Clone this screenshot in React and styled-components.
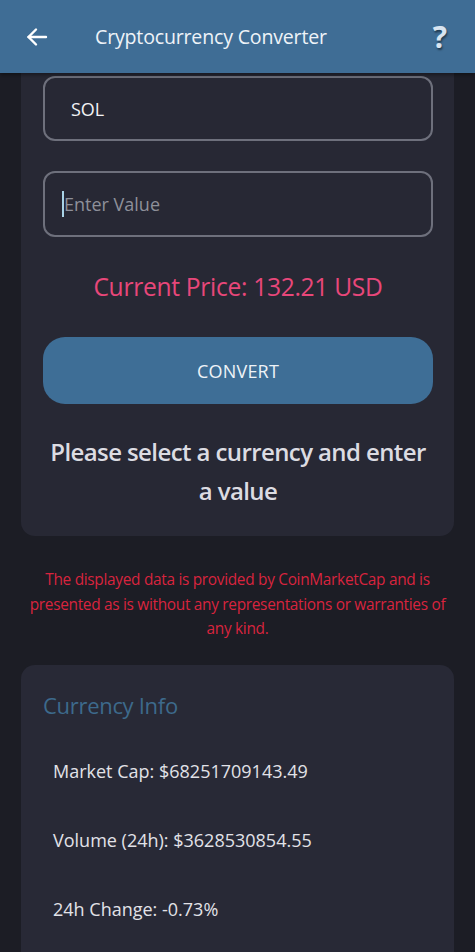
import React from "react";
import styled, { createGlobalStyle } from "styled-components";

const Global = createGlobalStyle`
  html, body { margin: 0; padding: 0; background: #1c1d25; }
  body { font-family: "Open Sans", "Noto Sans", sans-serif; overflow: hidden; }
  * { box-sizing: border-box; }
`;

const Page = styled.div`
  width: 475px;
  height: 952px;
  background: #1c1d25;
  display: flex;
  flex-direction: column;
  overflow: hidden;
`;

const Header = styled.header`
  height: 73px;
  flex-shrink: 0;
  background: #3f6d95;
  display: flex;
  align-items: center;
  padding: 0 28px 0 25px;
  box-shadow: 0 2px 4px rgba(0,0,0,0.4);
  position: relative;
  z-index: 2;
`;

const Title = styled.h1`
  margin: 0 0 0 46px;
  flex: 1;
  font-size: 19.6px;
  font-weight: 400;
  color: #eef3f8;
  letter-spacing: -0.2px;
`;

const Help = styled.span`
  font-size: 30px;
  font-weight: 700;
  color: #d8e4f0;
  text-shadow: 1px 2px 2px rgba(0,0,0,0.45);
  line-height: 1;
`;

const Content = styled.main`
  padding: 0 21px;
  display: flex;
  flex-direction: column;
`;

const Card = styled.section`
  background: #272834;
  border-radius: 0 0 14px 14px;
  padding: 3px 21px 26px 22px;
  display: flex;
  flex-direction: column;
  align-items: center;
`;

const Field = styled.div`
  width: 100%;
  height: ${p => p.$h}px;
  border: 2px solid #6e707c;
  border-radius: 12px;
  display: flex;
  align-items: center;
  padding-left: ${p => p.$pad}px;
  margin-bottom: ${p => p.$mb || 0}px;
  font-size: ${p => p.$fs}px;
  color: ${p => p.$color};
`;

const Caret = styled.span`
  display: inline-block;
  width: 2px;
  height: 26px;
  background: #a9d3e6;
`;

const Price = styled.div`
  margin-top: 33px;
  font-size: 24.6px;
  color: #e8477a;
  font-weight: 500;
  letter-spacing: -0.3px;
`;

const Button = styled.button`
  margin-top: 34px;
  width: 100%;
  height: 67px;
  border: none;
  border-radius: 22px;
  background: #3e6e96;
  color: #eef3f8;
  font-family: inherit;
  font-size: 18px;
  letter-spacing: 0.2px;
`;

const Message = styled.p`
  margin: 28px 0 0;
  text-align: center;
  font-size: 24px;
  line-height: 39px;
  font-weight: 600;
  color: #dcdce2;
  letter-spacing: -0.6px;
`;

const Disclaimer = styled.p`
  margin: 32px 0 0;
  padding: 0;
  text-align: center;
  font-size: 15.4px;
  line-height: 24.5px;
  color: #d8243e;
  letter-spacing: -0.3px;
`;

const InfoCard = styled.section`
  margin-top: 23px;
  background: #282936;
  border-radius: 14px;
  padding: 24px 22px 80px;
  display: flex;
  flex-direction: column;
`;

const InfoTitle = styled.h2`
  margin: 0;
  font-size: 22px;
  font-weight: 500;
  color: #3d6a8c;
  line-height: 32px;
  letter-spacing: -0.3px;
`;

const InfoItem = styled.div`
  margin-top: ${p => p.$mt}px;
  padding-left: 10px;
  font-size: 18px;
  line-height: 28px;
  color: #e2e2e8;
`;

const BackArrow = () => (
  <svg width="24" height="24" viewBox="0 0 24 24" fill="none" stroke="#ffffff" strokeWidth="2.4" strokeLinecap="round" strokeLinejoin="round">
    <path d="M21 12H3.5" />
    <path d="M11 4.5L3.5 12L11 19.5" />
  </svg>
);

export default function App() {
  return (
    <Page>
      <Global />
      <Header>
        <BackArrow />
        <Title>Cryptocurrency Converter</Title>
        <Help>?</Help>
      </Header>
      <Content>
        <Card>
          <Field $h={65} $pad={26} $fs={18} $color="#f2f2f5" $mb={30}>SOL</Field>
          <Field $h={66} $pad={17} $fs={18} $color="#8e909a"><Caret />Enter Value</Field>
          <Price>Current Price: 132.21 USD</Price>
          <Button>CONVERT</Button>
          <Message>Please select a currency and enter a value</Message>
        </Card>
        <Disclaimer>
          The displayed data is provided by CoinMarketCap and is presented as is without any representations or warranties of any kind.
        </Disclaimer>
        <InfoCard>
          <InfoTitle>Currency Info</InfoTitle>
          <InfoItem $mt={36}>Market Cap: $68251709143.49</InfoItem>
          <InfoItem $mt={41}>Volume (24h): $3628530854.55</InfoItem>
          <InfoItem $mt={41}>24h Change: -0.73%</InfoItem>
        </InfoCard>
      </Content>
    </Page>
  );
}
